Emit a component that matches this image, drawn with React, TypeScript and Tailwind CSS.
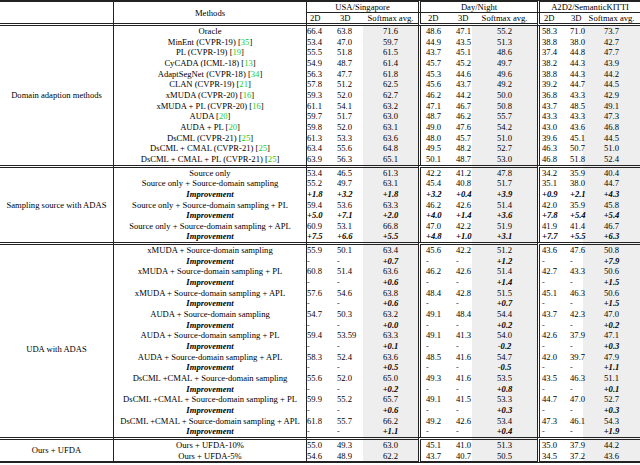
import type { ReactNode } from "react"

type Row = { m: ReactNode; v: string[]; imp?: boolean }
type Section = { label: string; labelCls?: string; rows: Row[] }

const cite = (n: number) => (
  <>
    [<span className="text-[#22cc22]">{n}</span>]
  </>
)

const I = (v: string[]): Row => ({ m: "Improvement", v, imp: true })
const D = (a: string, b: string, c: string) => ["-", "-", a, "-", "-", b, "-", "-", c]

const sections: Section[] = [
  {
    label: "Domain adaption methods",
    rows: [
      { m: "Oracle", v: ["66.4", "63.8", "71.6", "48.6", "47.1", "55.2", "58.3", "71.0", "73.7"] },
      { m: <>MinEnt (CVPR-19) {cite(35)}</>, v: ["53.4", "47.0", "59.7", "44.9", "43.5", "51.3", "38.8", "38.0", "42.7"] },
      { m: <>PL (CVPR-19) {cite(19)}</>, v: ["55.5", "51.8", "61.5", "43.7", "45.1", "48.6", "37.4", "44.8", "47.7"] },
      { m: <>CyCADA (ICML-18) {cite(13)}</>, v: ["54.9", "48.7", "61.4", "45.7", "45.2", "49.7", "38.2", "44.3", "43.9"] },
      { m: <>AdaptSegNet (CVPR-18) {cite(34)}</>, v: ["56.3", "47.7", "61.8", "45.3", "44.6", "49.6", "38.8", "44.3", "44.2"] },
      { m: <>CLAN (CVPR-19) {cite(21)}</>, v: ["57.8", "51.2", "62.5", "45.6", "43.7", "49.2", "39.2", "44.7", "44.5"] },
      { m: <>xMUDA (CVPR-20) {cite(16)}</>, v: ["59.3", "52.0", "62.7", "46.2", "44.2", "50.0", "36.8", "43.3", "42.9"] },
      { m: <>xMUDA + PL (CVPR-20) {cite(16)}</>, v: ["61.1", "54.1", "63.2", "47.1", "46.7", "50.8", "43.7", "48.5", "49.1"] },
      { m: <>AUDA {cite(20)}</>, v: ["59.7", "51.7", "63.0", "48.7", "46.2", "55.7", "43.3", "43.3", "47.3"] },
      { m: <>AUDA + PL {cite(20)}</>, v: ["59.8", "52.0", "63.1", "49.0", "47.6", "54.2", "43.0", "43.6", "46.8"] },
      { m: <>DsCML (CVPR-21) {cite(25)}</>, v: ["61.3", "53.3", "63.6", "48.0", "45.7", "51.0", "39.6", "45.1", "44.5"] },
      { m: <>DsCML + CMAL (CVPR-21) {cite(25)}</>, v: ["63.4", "55.6", "64.8", "49.5", "48.2", "52.7", "46.3", "50.7", "51.0"] },
      { m: <>DsCML + CMAL + PL (CVPR-21) {cite(25)}</>, v: ["63.9", "56.3", "65.1", "50.1", "48.7", "53.0", "46.8", "51.8", "52.4"] },
    ],
  },
  {
    label: "Sampling source with ADAS",
    rows: [
      { m: "Source only", v: ["53.4", "46.5", "61.3", "42.2", "41.2", "47.8", "34.2", "35.9", "40.4"] },
      { m: "Source only + Source-domain sampling", v: ["55.2", "49.7", "63.1", "45.4", "40.8", "51.7", "35.1", "38.0", "44.7"] },
      I(["+1.8", "+3.2", "+1.8", "+3.2", "+0.4", "+3.9", "+0.9", "+2.1", "+4.3"]),
      { m: "Source only + Source-domain sampling + PL", v: ["59.4", "53.6", "63.3", "46.2", "42.6", "51.4", "42.0", "35.9", "45.8"] },
      I(["+5.0", "+7.1", "+2.0", "+4.0", "+1.4", "+3.6", "+7.8", "+5.4", "+5.4"]),
      { m: "Source only + Source-domain sampling + APL", v: ["60.9", "53.1", "66.8", "47.0", "42.2", "51.9", "41.9", "41.4", "46.7"] },
      I(["+7.5", "+6.6", "+5.5", "+4.8", "+1.0", "+3.1", "+7.7", "+5.5", "+6.3"]),
    ],
  },
  {
    label: "UDA with ADAS",
    labelCls: "pt-[16px]",
    rows: [
      { m: "xMUDA + Source-domain sampling", v: ["55.9", "50.1", "63.4", "45.6", "42.2", "51.2", "43.6", "47.6", "50.8"] },
      I(D("+0.7", "+1.2", "+7.9")),
      { m: "xMUDA + Source-domain sampling + PL", v: ["60.8", "51.4", "63.6", "46.2", "42.6", "51.4", "42.7", "43.3", "50.6"] },
      I(D("+0.6", "+1.4", "+1.5")),
      { m: "xMUDA + Source-domain sampling + APL", v: ["57.6", "54.6", "63.8", "48.4", "42.8", "51.5", "45.1", "46.3", "50.6"] },
      I(D("+0.6", "+0.7", "+1.5")),
      { m: "AUDA + Source-domain sampling", v: ["54.7", "50.3", "63.2", "49.1", "48.4", "54.4", "43.7", "42.3", "47.0"] },
      I(D("+0.0", "+0.2", "+0.2")),
      { m: "AUDA + Source-domain sampling + PL", v: ["59.4", "53.59", "63.3", "49.1", "41.3", "54.0", "42.6", "37.9", "47.1"] },
      I(D("+0.1", "-0.2", "+0.3")),
      { m: "AUDA + Source-domain sampling + APL", v: ["58.3", "52.4", "63.6", "48.5", "41.6", "54.7", "42.0", "39.7", "47.9"] },
      I(D("+0.5", "-0.5", "+1.1")),
      { m: "DsCML +CMAL + Source-domain sampling", v: ["55.6", "52.0", "65.0", "49.3", "41.6", "53.5", "43.5", "46.3", "51.1"] },
      I(D("+0.2", "+0.8", "+0.1")),
      { m: "DsCML +CMAL + Source-domain sampling + PL", v: ["59.9", "55.2", "65.7", "49.1", "41.5", "53.3", "44.7", "47.0", "52.7"] },
      I(D("+0.6", "+0.3", "+0.3")),
      { m: "DsCML +CMAL + Source-domain sampling + APL", v: ["61.8", "55.7", "66.2", "49.2", "42.6", "53.4", "47.3", "46.1", "54.3"] },
      I(D("+1.1", "+0.4", "+1.9")),
    ],
  },
  {
    label: "Ours + UFDA",
    rows: [
      { m: "Ours + UFDA-10%", v: ["55.0", "49.3", "63.0", "45.1", "41.0", "51.3", "35.0", "37.9", "44.2"] },
      { m: "Ours + UFDA-5%", v: ["54.6", "48.9", "62.2", "43.7", "40.7", "50.5", "34.5", "37.2", "43.6"] },
    ],
  },
]

// per data column: position + shading
const colCls = [
  "border-l pl-0 text-left",
  "pl-[7px] text-left",
  "text-center bg-[#eeeeee]",
  "border-l-[3px] [border-left-style:double] pl-[5px] text-left",
  "pl-[6px] text-left",
  "text-center bg-[#eeeeee]",
  "border-l-[3px] [border-left-style:double] pl-[2px] text-left",
  "pl-[5px] text-left",
  "text-center bg-[#eeeeee]",
]

const headCls = [
  "border-l pl-[3px] text-left",
  "pl-[10px] text-left",
  "text-center",
  "border-l-[3px] [border-left-style:double] pl-[7px] text-left",
  "pl-[8px] text-left",
  "text-center",
  "border-l-[3px] [border-left-style:double] pl-[4px] text-left",
  "pl-[6px] text-left",
  "text-center",
]

const groupCls = ["border-l", "border-l-[3px] [border-left-style:double]", "border-l-[3px] [border-left-style:double]"]
const groups = ["USA/Singapore", "Day/Night", "A2D2/SemanticKITTI"]
const widths = ["w-[113px]", "w-[193px]", "w-[24px]", "w-[33px]", "w-[55px]", "w-[32px]", "w-[22px]", "w-[65px]", "w-[28px]", "w-[18px]", "w-[57px]"]

const sepTop = "border-t-[3px] [border-top-style:double]"
const headBottom = "border-b-[3px] [border-bottom-style:double]"

export default function App() {
  return (
    <div className="w-[640px] h-[465px] bg-white overflow-hidden">
      <table className="w-[640px] table-fixed border-separate border-spacing-0 font-['Liberation_Serif',serif] text-[8.6px] text-black">
        <colgroup>
          {widths.map((w, i) => (
            <col key={i} className={w} />
          ))}
        </colgroup>
        <thead>
          <tr className="leading-[10px]">
            <th rowSpan={2} className={`p-0 font-normal border-[#222] border-t-2 ${headBottom}`} />
            <th rowSpan={2} className={`p-0 font-normal text-center border-[#222] border-t-2 border-l ${headBottom}`}>
              Methods
            </th>
            {groups.map((g, i) => (
              <th key={g} colSpan={3} className={`p-0 font-normal text-center border-[#222] border-t-2 border-b ${groupCls[i]}`}>
                {g}
              </th>
            ))}
          </tr>
          <tr className="leading-[10px]">
            {["2D", "3D", "Softmax avg.", "2D", "3D", "Softmax avg.", "2D", "3D", "Softmax avg."].map((h, i) => (
              <th key={i} className={`p-0 font-normal whitespace-nowrap border-[#222] ${headBottom} ${headCls[i]}`}>
                {h}
              </th>
            ))}
          </tr>
        </thead>
        <tbody>
          {sections.map((s, si) =>
            s.rows.map((r, ri) => {
              const first = ri === 0
              const top = first && si > 0 ? sepTop : ""
              const last = si === sections.length - 1 && ri === s.rows.length - 1
              const bottom = last ? "border-b-2" : ""
              return (
                <tr key={`${si}-${ri}`} className="leading-[10.65px]">
                  {first && (
                    <td
                      rowSpan={s.rows.length}
                      className={`p-0 text-center border-[#222] ${top} ${si === sections.length - 1 ? "border-b-2" : ""} ${s.labelCls ?? ""}`}
                    >
                      {s.label}
                    </td>
                  )}
                  <td className={`p-0 text-center whitespace-nowrap border-[#222] border-l ${top} ${bottom} ${r.imp ? "font-bold italic" : ""}`}>
                    {r.m}
                  </td>
                  {r.v.map((v, i) => (
                    <td
                      key={i}
                      className={`p-0 whitespace-nowrap border-[#222] ${colCls[i]} ${top} ${bottom} ${r.imp ? "font-bold italic" : ""}`}
                    >
                      {v}
                    </td>
                  ))}
                </tr>
              )
            })
          )}
        </tbody>
      </table>
    </div>
  )
}
